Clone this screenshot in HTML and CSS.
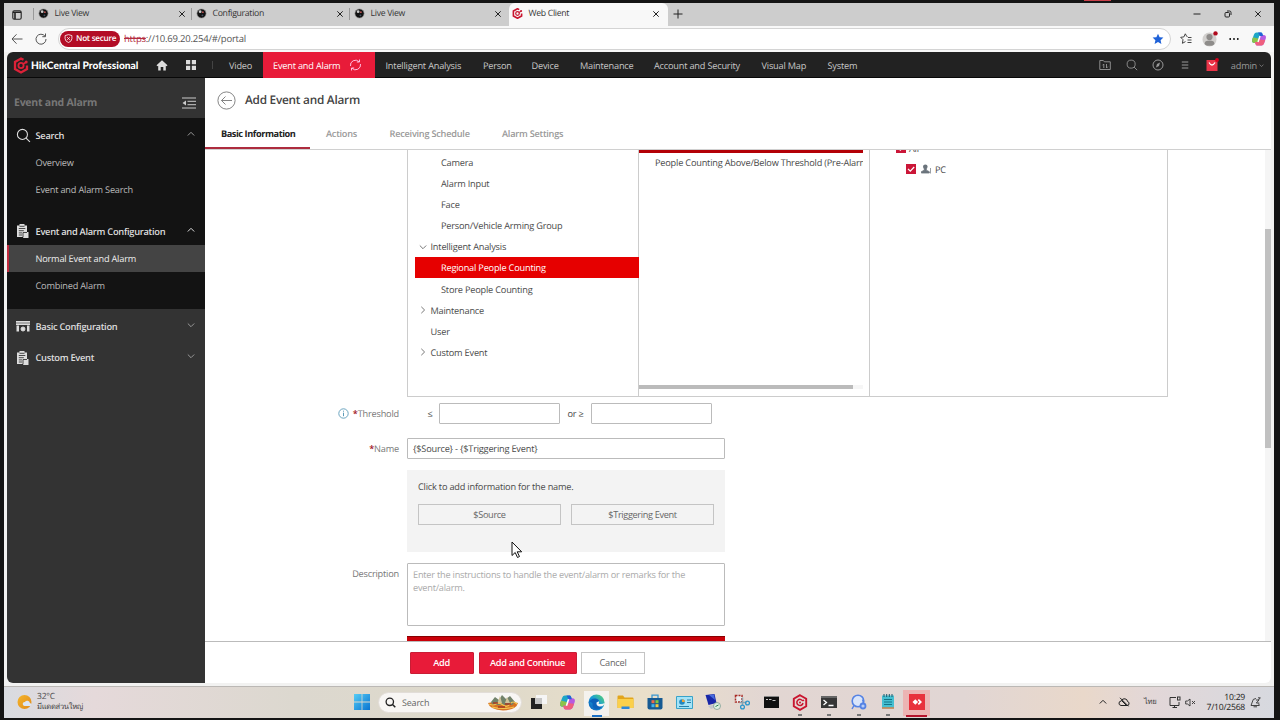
FILE: index.html
```html
<!DOCTYPE html>
<html lang="en">
<head>
    <meta charset="UTF-8">
    <meta name="viewport" content="width=device-width, initial-scale=1.0">
    <title>Web Client</title>
    <link rel="stylesheet" href="styles.css">
</head>
<body>
    <svg class="defs" width="0" height="0">
        <defs>
            <linearGradient id="blue" x1="0" y1="0" x2="1" y2="1"><stop offset="0" stop-color="#55cdf6"/><stop offset="1" stop-color="#0873d0"/></linearGradient>
            <linearGradient id="edge" x1="0" y1="1" x2="1" y2="0"><stop offset="0" stop-color="#0b56b4"/><stop offset=".5" stop-color="#169bd9"/><stop offset="1" stop-color="#5fd86a"/></linearGradient>
            <linearGradient id="sun" x1="0" y1="0" x2="1" y2="1"><stop offset="0" stop-color="#f5b52a"/><stop offset="1" stop-color="#e08a1c"/></linearGradient>
            <symbol id="globe" viewBox="0 0 12 12">
                <circle cx="6" cy="6" r="5" fill="#111" stroke="#999" stroke-width=".7"/>
                <circle cx="4.5" cy="4" r="1.5" fill="#ccc"/><circle cx="7.5" cy="4.5" r="1" fill="#b55"/><circle cx="7" cy="8" r="1" fill="#456"/>
            </symbol>
            <symbol id="close" viewBox="0 0 8 8"><path d="M1.3 1.3l5.4 5.4M6.7 1.3L1.3 6.7" stroke="#222" fill="none"/></symbol>
            <symbol id="hik" viewBox="0 0 16 16">
                <path d="M10.5 2.3L8 1 2 4.4v7.2L8 15l6-3.4V8" fill="none" stroke="currentColor" stroke-width="2.3"/>
                <circle cx="8" cy="8" r="2.6" fill="none" stroke="currentColor" stroke-width="1.8"/>
                <path d="M10 6.5l3.5-2" stroke="currentColor" stroke-width="1.5"/><circle cx="13.2" cy="4.4" r="1.5" fill="currentColor"/>
            </symbol>
            <symbol id="hex" viewBox="0 0 16 17">
                <path d="M8 1.200L14.200 4.800v7.400L8 15.800 1.800 12.200V4.800z" fill="none" stroke="currentColor" stroke-width="1.900"/>
                <path d="M10.700 7A3.100 3.100 0 1 0 11 9" fill="none" stroke="currentColor" stroke-width="1.500"/><circle cx="8" cy="8.500" r="1" fill="currentColor"/><path d="M10.500 7l1.500-1" stroke="currentColor" stroke-width="1.500"/>
            </symbol>
            <symbol id="copilot" viewBox="0 0 16 16">
                <path d="M5.5 1.5h4.2c1 0 1.5.6 1.8 1.5L12 5H9L6.7 12H3.5C1.3 12 .6 10.500 1.200 8.500L3 3.500Q3.700 1.500 5.500 1.500z" fill="#1ea6c6"/>
                <path d="M1.200 8.500L2 6.200l6 1.600L6.700 12H3.500C1.300 12 .6 10.500 1.200 8.500z" fill="#8cc34b"/>
                <path d="M10.500 14.500H6.300c-1 0-1.500-.6-1.800-1.500L4 11h3l2.300-7h3.200c2.200 0 2.900 1.500 2.300 3.500L13 12.500q-.7 2-2.500 2z" fill="#b65be0"/>
                <path d="M10.500 14.500H6.300c-1 0-1.500-.6-1.800-1.500L4 11h3l.9-2.600 6.300.700L13 12.500q-.7 2-2.500 2z" fill="#ef5f7e"/>
                <path d="M7 1.500h2.700c1 0 1.500.6 1.800 1.500L12 5H9z" fill="#2460d8"/>
                <path d="M9 5L7 11" stroke="#fff" stroke-width="1.500"/>
            </symbol>
            <symbol id="up" viewBox="0 0 8 8"><path d="M.8 5.500L4 2.300l3.200 3.200" fill="none" stroke="currentColor"/></symbol>
            <symbol id="down" viewBox="0 0 8 8"><path d="M.8 2.500L4 5.700l3.200-3.200" fill="none" stroke="currentColor"/></symbol>
            <symbol id="right" viewBox="0 0 8 8"><path d="M2.300.8L5.600 4 2.300 7.200" fill="none" stroke="currentColor"/></symbol>
            <symbol id="lens" viewBox="0 0 14 14"><circle cx="6" cy="6" r="4.700" fill="none" stroke="currentColor"/><path d="M9.400 9.400l3.600 3.600" stroke="currentColor"/></symbol>
            <symbol id="clip" viewBox="0 0 13 14">
                <path d="M1 1.500h2.500V0h5v1.500H11V8h1.500v6H7v-1H1z" fill="currentColor"/>
                <path d="M2.800 4.500h6.500M2.800 6.700h5M2.800 8.900h3.200M2.800 11h3.200M3.500 2.300h5M7 13.500V8.500h4" stroke="#222" stroke-width=".8" fill="none"/>
            </symbol>
            <symbol id="check" viewBox="0 0 10 10"><path d="M0 0h10v10H0z" fill="#cb1638"/><path d="M2 4.800L4.300 7.200 8.200 3" fill="none" stroke="#fff" stroke-width="1.200"/></symbol>
        </defs>
    </svg>

    <div class="window">
        <div class="tabstrip">
            <div class="tab-actions">
                <svg width="10" height="10" viewBox="0 0 10 10"><rect x=".8" y=".8" width="8.400" height="8.400" rx="1.500" fill="none" stroke="#222" stroke-width="1.100"/><path d="M1 2.200h8M3 2v7" stroke="#222" stroke-width="1.600"/></svg>
            </div>
            <div class="tab"><svg width="11" height="11"><use href="#globe"/></svg><span>Live View</span><svg class="x" width="8" height="8"><use href="#close"/></svg></div>
            <div class="tab"><svg width="11" height="11"><use href="#globe"/></svg><span>Configuration</span><svg class="x" width="8" height="8"><use href="#close"/></svg></div>
            <div class="tab"><svg width="11" height="11"><use href="#globe"/></svg><span>Live View</span><svg class="x" width="8" height="8"><use href="#close"/></svg></div>
            <div class="tab active"><svg class="red" width="11" height="11"><use href="#hik"/></svg><span>Web Client</span><svg class="x" width="8" height="8"><use href="#close"/></svg></div>
            <svg class="plus" width="10" height="10" viewBox="0 0 10 10"><path d="M5 .5v9M.5 5h9" stroke="#222"/></svg>
            <div class="win-buttons">
                <svg width="8" height="8" viewBox="0 0 8 8"><path d="M.5 4h7" stroke="#222"/></svg>
                <svg width="8" height="8" viewBox="0 0 8 8"><rect x="1" y="2.500" width="4.500" height="4.500" rx="1" fill="none" stroke="#222"/><path d="M3 1h2.500Q7 1 7 2.500V5" fill="none" stroke="#222"/></svg>
                <svg width="8" height="8"><use href="#close"/></svg>
            </div>
        </div>

        <div class="toolbar">
            <svg class="back" width="12" height="12" viewBox="0 0 12 12"><path d="M11.500 6H1M5.500 1.300L1 6l4.500 4.700" fill="none" stroke="#555"/></svg>
            <svg class="reload" width="12" height="12" viewBox="0 0 12 12"><path d="M10 3.200A5 5 0 1 0 11 6M10.500.5v3.200H7.300" fill="none" stroke="#555"/></svg>
            <div class="address">
                <span class="insecure"><svg width="9" height="9" viewBox="0 0 9 9"><path d="M4.500.6l3.400 1v3q0 2.700-3.400 3.900Q1.100 7.300 1.100 4.600v-3zM3.200 3.200l2.600 2.600m0-2.600L3.200 5.800" fill="none" stroke="#fff" stroke-width=".8"/></svg>Not secure</span>
                <span class="url"><s>https</s>://10.69.20.254/#/portal</span>
                <svg class="star" width="12" height="12" viewBox="0 0 12 12"><path d="M6 .7l1.600 3.500 3.800.4-2.800 2.600.8 3.800L6 9.100 2.600 11l.8-3.800L.6 4.600l3.800-.4z" fill="#1f62d8"/></svg>
            </div>
            <svg class="fav" width="12" height="12" viewBox="0 0 12 12"><path d="M7.500 3.700L6.800 3.500 5.300.8 3.900 3.900.7 4.300 3 6.700l-.6 3.600L5.500 8.600M8 4.500h3.500M7.500 7h4M7.500 9.500h4" fill="none" stroke="#333" stroke-width=".9"/></svg>
            <svg class="avatar" width="17" height="16" viewBox="0 0 17 16"><circle cx="7.500" cy="8.500" r="7" fill="#d2d0ce"/><circle cx="7.500" cy="6" r="3.100" fill="#8e8c8a"/><ellipse cx="7.500" cy="12.200" rx="4.800" ry="2.600" fill="#8e8c8a"/><circle cx="13.500" cy="2.400" r="2.200" fill="#b0091c"/></svg>
            <svg class="dots" width="10" height="4" viewBox="0 0 10 4"><circle cx="1.200" cy="2" r=".9"/><circle cx="5" cy="2" r=".9"/><circle cx="8.800" cy="2" r=".9"/></svg>
            <svg width="16" height="16"><use href="#copilot"/></svg>
        </div>

        <div class="app">
            <header class="topbar">
                <svg class="brand-mark" width="16" height="17"><use href="#hik"/></svg>
                <span class="brand">HikCentral Professional</span>
                <svg class="home" width="12" height="11" viewBox="0 0 12 11"><path d="M6 .3l5.500 5-1 .9-.7-.5V10.500H7.300V7H4.700v3.500H2.200V5.700l-.7.5-1-.9z" fill="#ddd"/></svg>
                <svg class="apps" width="10" height="10" viewBox="0 0 10 10"><path d="M0 0h4.200v4.200H0zM5.800 0H10v4.200H5.800zM0 5.800h4.200V10H0zM5.800 5.800H10V10H5.800z" fill="#ddd"/></svg>
                <i class="bar"></i>
                <nav class="nav">
                    <span>Video</span>
                    <span class="current">Event and Alarm
                        <svg width="13" height="12" viewBox="0 0 13 12"><path d="M1.500 7A5 5 0 0 1 10 2.700M11.500 5A5 5 0 0 1 3 9.300M7.800 3h2.700V.5M5.200 9H2.500v2.500" fill="none" stroke="#fbd"/></svg>
                    </span>
                    <span>Intelligent Analysis</span>
                    <span>Person</span>
                    <span>Device</span>
                    <span>Maintenance</span>
                    <span>Account and Security</span>
                    <span>Visual Map</span>
                    <span>System</span>
                </nav>
                <div class="tools">
                    <svg width="12" height="12" viewBox="0 0 12 12"><path d="M.8 10.500v-9h3.500l1 1.300h6v7.700zM4.800 9V5L3.500 6.300M7.500 5v4l1.300-1.300" fill="none" stroke="#999" stroke-width=".9"/></svg>
                    <svg width="12" height="12"><use href="#lens"/></svg>
                    <svg width="12" height="12" viewBox="0 0 12 12"><circle cx="6" cy="6" r="5" fill="none" stroke="#999"/><path d="M8 3.500L7 7 4 8.500 5 5z" fill="#999"/></svg>
                    <svg width="12" height="12" viewBox="0 0 12 12"><path d="M2.800 3h6.500M2.800 6h6.500M2.800 9h6.500" stroke="#999"/></svg>
                    <svg width="14" height="14" viewBox="0 0 14 14"><path d="M1.500 2h11v11h-11z" fill="#ea3448"/><path d="M4 4.500q3 5 6 0" fill="none" stroke="#fff" stroke-width="1.300"/><circle cx="12" cy="2" r="1.900" fill="#d8001c"/></svg>
                    <span class="user">admin <svg width="5" height="5"><use href="#down"/></svg></span>
                </div>
            </header>

            <div class="main">
                <aside class="sidebar">
                    <div class="side-title"><span>Event and Alarm</span>
                        <svg width="14" height="12" viewBox="0 0 14 12"><path d="M0 1h14M5.500 4.300H14M5.500 7.700H14M0 11h14" stroke="#ccc"/><path d="M4 3.500v5L.5 6z" fill="#ccc"/></svg>
                    </div>
                    <div class="group">
                        <div class="head first"><svg width="15" height="15"><use href="#lens"/></svg><span>Search</span><svg class="arrow" width="8" height="8"><use href="#up"/></svg></div>
                        <div class="item short">Overview</div>
                        <div class="item">Event and Alarm Search</div>
                        <div class="head second"><svg width="13" height="14"><use href="#clip"/></svg><span>Event and Alarm Configuration</span><svg class="arrow bright" width="8" height="8"><use href="#up"/></svg></div>
                        <div class="item selected">Normal Event and Alarm</div>
                        <div class="item">Combined Alarm</div>
                    </div>
                    <div class="head basic"><svg width="14" height="13" viewBox="0 0 14 13"><path d="M0 1h14v4H0zM.5 5.500h2.500v6H.5zM11 5.500h2.500v6H11zM5 7l1.200.3.800-1.300.8 1.300L9 7l-.2 1.300 1.200.7-1.200.8L9 11l-1.200-.3L7 12l-.8-1.300L5 11l.2-1.200L4 9l1.200-.7z" fill="currentColor"/><path d="M0 3h14" stroke="#777"/></svg><span>Basic Configuration</span><svg class="arrow" width="8" height="8"><use href="#down"/></svg></div>
                    <div class="head custom"><svg width="13" height="14"><use href="#clip"/></svg><span>Custom Event</span><svg class="arrow" width="8" height="8"><use href="#down"/></svg></div>
                </aside>

                <section class="content">
                    <div class="page-title">
                        <svg width="19" height="19" viewBox="0 0 19 19"><circle cx="9.500" cy="9.500" r="8.600" fill="none" stroke="#777" stroke-width=".9"/><path d="M15 9.500H4.500M8.500 5.500l-4 4 4 4" fill="none" stroke="#777" stroke-width=".9"/></svg>
                        <h1>Add Event and Alarm</h1>
                    </div>
                    <div class="tabs">
                        <span class="on">Basic Information</span>
                        <span>Actions</span>
                        <span>Receiving Schedule</span>
                        <span>Alarm Settings</span>
                    </div>

                    <div class="scroller">
                        <div class="form">
                            <div class="picker">
                                <ul class="tree">
                                    <li class="leaf">Camera</li>
                                    <li class="leaf">Alarm Input</li>
                                    <li class="leaf">Face</li>
                                    <li class="leaf">Person/Vehicle Arming Group</li>
                                    <li><svg width="8" height="8"><use href="#down"/></svg>Intelligent Analysis</li>
                                    <li class="leaf chosen">Regional People Counting</li>
                                    <li class="leaf">Store People Counting</li>
                                    <li><svg width="8" height="8"><use href="#right"/></svg>Maintenance</li>
                                    <li class="plain">User</li>
                                    <li><svg width="8" height="8"><use href="#right"/></svg>Custom Event</li>
                                </ul>
                                <div class="events">
                                    <div class="event-chosen"></div>
                                    <div class="event">People Counting Above/Below Threshold (Pre-Alarm)</div>
                                    <div class="hbar"><i></i></div>
                                </div>
                                <div class="sources">
                                    <div class="source all"><svg class="toggle" width="8" height="8"><use href="#down"/></svg><svg width="10" height="10"><use href="#check"/></svg><span>All</span></div>
                                    <div class="source"><svg width="10" height="10"><use href="#check"/></svg>
                                        <svg class="person" width="11" height="10" viewBox="0 0 11 10"><circle cx="4.300" cy="2.700" r="2.300" fill="#6b747c"/><path d="M3.300 4.500h2v1.700l3 1.500V9H.3V7.700l3-1.500z" fill="#6b747c" stroke="#6b747c" stroke-width=".8"/><path d="M9.500 4v5.500" stroke="#9aa0a6"/></svg><span>PC</span></div>
                                </div>
                            </div>

                            <div class="row threshold">
                                <label><svg width="11" height="11" viewBox="0 0 11 11"><circle cx="5.500" cy="5.500" r="4.700" fill="none" stroke="#5b9bb8" stroke-width=".9"/><path d="M5.500 4.700v3.500M5.500 2.700v1" stroke="#5b9bb8"/></svg><b>*</b>Threshold</label>
                                <span class="le">≤</span><div class="input small"></div>
                                <span class="ge">or ≥</span><div class="input small"></div>
                            </div>
                            <div class="row name">
                                <label><b>*</b>Name</label>
                                <div class="input wide">{$Source} - {$Triggering Event}</div>
                            </div>
                            <div class="hint">
                                <p>Click to add information for the name.</p>
                                <div class="chips"><button>$Source</button><button>$Triggering Event</button></div>
                            </div>
                            <div class="row description">
                                <label>Description</label>
                                <div class="input area">Enter the instructions to handle the event/alarm or remarks for the event/alarm.</div>
                            </div>
                            <div class="next-block"></div>
                        </div>
                        <div class="vbar"><i></i></div>
                    </div>

                    <div class="footer">
                        <button class="primary add">Add</button>
                        <button class="primary continue">Add and Continue</button>
                        <button class="cancel">Cancel</button>
                    </div>
                </section>
            </div>
        </div>

        <div class="taskbar">
            <div class="weather">
                <svg width="16" height="16" viewBox="0 0 16 16"><circle cx="7.500" cy="8" r="7" fill="url(#sun)"/><path d="M7.500 12a2 2 0 0 1 .4-4 2.700 2.700 0 0 1 5 1 1.600 1.600 0 0 1 .6 3z" fill="#dce6f4"/></svg>
                <div><span>32°C</span><span class="thai">มีแดดส่วนใหญ่</span></div>
            </div>
            <svg class="start" width="16" height="16" viewBox="0 0 16 16"><path d="M0 0h7.600v7.600H0zM8.400 0H16v7.600H8.400zM0 8.400h7.600V16H0zM8.400 8.400H16V16H8.400z" fill="url(#blue)"/></svg>
            <div class="search">
                <svg width="11" height="11" viewBox="0 0 11 11"><circle cx="4.800" cy="4.800" r="3.700" fill="none" stroke="#222" stroke-width="1.300"/><path d="M7.500 7.500l2.800 2.800" stroke="#222" stroke-width="1.500"/></svg>
                <span>Search</span>
                <svg width="32" height="17" viewBox="0 0 32 17"><path d="M1 9q15-4 30 0-2 7-15 7.500Q3 16 1 9z" fill="#d77322"/><path d="M4 8l4-5 4 3 3-5 4 4 4-3 5 6-3 3H6z" fill="#71826a"/><path d="M13 2l2 7-5 1zM20 3l3 6h-5z" fill="#cfc39a"/><path d="M2 10q4 2 7 0t7 1 7-1 7 0M5 13q10 3 22 0" fill="none" stroke="#f4c451" stroke-width="1.200"/><path d="M6 9h5M18 10h6M11 13h7" stroke="#a53c24" stroke-width="1.500"/></svg>
            </div>
            <div class="pins">
                <span><svg width="16" height="16" viewBox="0 0 16 16"><path d="M5 1h11v9H5z" fill="#f5f5f5"/><path d="M0 4h11v11H0z" fill="#222"/><path d="M4 4h7v6H4z" fill="#c5c5c5"/></svg></span>
                <span><svg width="17" height="17"><use href="#copilot"/></svg></span>
                <span class="lit"><svg width="17" height="17" viewBox="0 0 17 17"><circle cx="8.500" cy="8.500" r="8" fill="url(#edge)"/><path d="M.6 9q2-5 7-4.500 3.800.5 3.500 3.500-.3 1.500-1 2 3 1.500 5.800-.5-2 6-7.400 6Q4 14.500 4.500 9.500 2 6.500.6 9z" fill="#0c62ba"/><path d="M8.500 8.500q-.5 3.500 3 4 3 .2 4.300-1.500l.7-2q-2 1.500-6 .8 1-1 .3-2.500z" fill="#f1f6f7"/></svg></span>
                <span><svg width="17" height="15" viewBox="0 0 17 15"><path d="M.5 1.500Q.5.500 1.500.5H6l1.500 2h8q1 0 1 1V13H.5z" fill="#e2a51c"/><path d="M.5 4h16v8q0 1-1 1h-14q-1 0-1-1z" fill="#fbd04b"/><path d="M4.500 11.500h8v2.500h-8z" fill="#2c87d8"/></svg></span>
                <span><svg width="16" height="16" viewBox="0 0 16 16"><path d="M5 4V1.200h6V4" fill="none" stroke="#3b97d0" stroke-width="1.300"/><path d="M.5 4h15v9.500q0 2-2 2h-11q-2 0-2-2z" fill="#165a92"/><path d="M4.500 6.200h3v3h-3z" fill="#ef6b46"/><path d="M8.500 6.200h3v3h-3z" fill="#82c83c"/><path d="M4.500 10.200h3v3h-3z" fill="#40b4ef"/><path d="M8.500 10.200h3v3h-3z" fill="#fac83e"/></svg></span>
                <span><svg width="17" height="13" viewBox="0 0 17 13"><path d="M.5.500h16v12H.5z" fill="#a4e3f7" stroke="#38a3c9"/><circle cx="6" cy="6" r="2.800" fill="#2287bf"/><path d="M6 6V3.200A2.800 2.800 0 0 1 8.800 6z" fill="#f0a236"/><path d="M11 4h4M11 6.500h4M3 10.500h10" stroke="#2b7fa6"/></svg></span>
                <span><svg width="16" height="16" viewBox="0 0 16 16"><path d="M.5 1l9-1 2 9-8 2z" fill="#1726a8"/><path d="M4 1l5-.6L10 6z" fill="#476bdd"/><path d="M3 12l8-2 2 2-7 3z" fill="#c3c7cc"/><circle cx="12" cy="12" r="3.500" fill="#dcefe0" stroke="#71948a" stroke-width=".7"/><path d="M10.500 12.500l3-1.500" stroke="#298150"/></svg></span>
                <span><svg width="16" height="16" viewBox="0 0 16 16"><path d="M1.500 1.500h6.500v6.500H1.500z" fill="#eee" stroke="#a92c26" stroke-width="1.500" stroke-dasharray="2 1"/><path d="M8.500 3.500v8M5.500 8.500h7" stroke="#8aa3b0" stroke-width="1.500"/><circle cx="8.500" cy="13" r="1.900" fill="none" stroke="#2b96cc" stroke-width="1.300"/><circle cx="13.500" cy="9" r="1.900" fill="none" stroke="#2b96cc" stroke-width="1.300"/></svg></span>
                <span><svg width="15" height="12" viewBox="0 0 15 12"><path d="M0 0h15v12H0z" fill="#111"/><path d="M0 .5h15" stroke="#888"/><path d="M2 3.500h2M5 3.500h2.500M8.500 4.500h3" stroke="#ddd" stroke-width=".9"/></svg></span>
                <span class="running brand-red"><svg width="16" height="17"><use href="#hex"/></svg></span>
                <span class="running"><svg width="16" height="14" viewBox="0 0 16 14"><path d="M0 1h16v12H0z" fill="#363636"/><path d="M0 1h16v2H0z" fill="#666"/><path d="M2.500 5l3 2.500-3 2.500M7.500 10.500h5" fill="none" stroke="#fff" stroke-width="1.300"/></svg></span>
                <span class="running"><svg width="16" height="16" viewBox="0 0 16 16"><circle cx="7" cy="7" r="5.800" fill="#d9e5fa" stroke="#5583e4" stroke-width="1.600"/><path d="M3 11.500L1 15M11.500 5.500q2 4-1 6.500" fill="none" stroke="#5583e4" stroke-width="1.500"/><circle cx="12" cy="12" r="2.500" fill="#b8cdf7" stroke="#5583e4" stroke-width="1.800"/></svg></span>
                <span class="running"><svg width="14" height="16" viewBox="0 0 14 16"><path d="M1 1.500h12v12H1z" fill="#45bfd1"/><path d="M3 0v3M5.700 0v3M8.300 0v3M11 0v3" stroke="#17586a"/><path d="M3 5.500h8M3 8h8M3 10.500h8" stroke="#147587"/><path d="M1 14h12" stroke="#b97334" stroke-width="1.300"/></svg></span>
                <span class="anydesk"><svg width="16" height="16" viewBox="0 0 16 16"><path d="M0 0h16v16H0z" fill="#e8313c"/><path d="M3.500 8l2.800-2.800L9.100 8l-2.800 2.800zM8.700 6.200l1.200-1.200L13 8l-3.100 3-1.200-1.200L10.400 8z" fill="#fff"/></svg></span>
            </div>
            <div class="tray">
                <svg class="up" width="8" height="8"><use href="#up"/></svg>
                <svg class="cloud" width="12" height="10" viewBox="0 0 12 10"><path d="M3 8.500Q.7 8 1 6t2.300-2Q4.500 1.200 7 1.800t2.500 2.700Q11.500 5 11 7T9 8.500zM2 .8l8.500 8.500M4 4l4.500 4.500" fill="none" stroke="#222"/></svg>
                <span class="thai lang">ไทย</span>
                <svg class="net" width="12" height="12" viewBox="0 0 12 12"><path d="M7 1.500H1v8h9V6M3.500 11.500h4.500M5.500 9.500v2" fill="none" stroke="#333"/><rect x="8.500" y="1" width="2.500" height="3" fill="none" stroke="#333"/></svg>
                <svg class="mute" width="11" height="9" viewBox="0 0 11 9"><path d="M.7 3h1.800L5 1v7L2.500 6H.7zM7 3l3 3M10 3L7 6" fill="none" stroke="#333" stroke-width=".9"/></svg>
                <div class="clock"><span>10:29</span><span>7/10/2568</span></div>
                <svg class="bell" width="11" height="11" viewBox="0 0 11 11"><path d="M6 1.500Q2.500 1.500 2.300 5L1 8.500h8.300L8.700 6.500M3.500 9.800h3.500M6 3h3L6.300 6h3M8 .8h2.300L8.500 3" fill="none" stroke="#333" stroke-width=".9"/></svg>
            </div>
        </div>
    </div>

    <svg class="cursor" width="12" height="18" viewBox="0 0 12 18"><path d="M1 1v13.500l3.200-3 2.300 5 2-1-2.300-4.700h4.500z" fill="#fff" stroke="#111"/></svg>
    <i class="rec"></i>
</body>
</html>
```
FILE: styles.css
```css
* {
    box-sizing: border-box;
    margin: 0;
    padding: 0;
}

body {
    width: 1280px;
    height: 720px;
    overflow: hidden;
    background-color: #141414;
    font-family: "Open Sans", "Noto Sans", sans-serif;
    font-size: 9.2px;
    letter-spacing: -0.2px;
    line-height: 13px;
    color: #4a4a4a;
    text-rendering: geometricPrecision;
    white-space: nowrap;
}

svg {
    display: block;
    flex-shrink: 0;
}

.defs {
    position: absolute;
}

.window {
    width: 1270px;
    height: 715px;
    margin: 3px 0 0 4px;
    background-color: #f2f2f1;
    display: flex;
    flex-direction: column;
}

/* browser chrome */
.tabstrip {
    height: 23px;
    background-color: #cdcdcd;
    display: flex;
    align-items: center;
    color: #333;
    font-size: 8.7px;
    letter-spacing: -0.3px;
}

.tab-actions {
    width: 29px;
    padding-left: 8px;
}

.tab {
    width: 158px;
    height: 23px;
    display: flex;
    align-items: center;
    padding: 0 5px 2px 5px;
    background: linear-gradient(#999, #999) 0 5px / 1px 12px no-repeat;
}

.tab span {
    margin-left: 5.5px;
    flex: 1;
}

.tab.active {
    background: #f8f8f8;
    border-radius: 6px 6px 0 0;
    margin-left: 2px;
    width: 159px;
    padding-left: 3px;
    padding-right: 8px;
}

.red,
.brand-red {
    color: #c9152f;
}

.plus {
    margin: 0 0 1px 5px;
}

.win-buttons {
    margin-left: auto;
    display: flex;
    gap: 22.5px;
    padding: 0 12px 2px 0;
}

.toolbar {
    height: 26px;
    background-color: #f8f8f8;
    display: flex;
    align-items: center;
    padding: 0 7px 1px 7px;
}

.reload {
    margin-left: 12px;
}

.address {
    width: 1113px;
    height: 22px;
    margin-left: 11px;
    border: 1px solid #d4d4d4;
    border-radius: 11px;
    background-color: #fff;
    display: flex;
    align-items: center;
    padding: 0 6px 0 1px;
}

.insecure {
    width: 60px;
    height: 16px;
    border-radius: 8px;
    background-color: #b30d26;
    color: #fff;
    font-weight: 600;
    font-size: 8.2px;
    letter-spacing: -0.28px;
    display: flex;
    align-items: center;
    gap: 3px;
    padding-left: 4px;
}

.url {
    margin-left: 4px;
    font-size: 9.5px;
    letter-spacing: -0.22px;
    color: #555;
}

.url s {
    color: #b32b40;
}

.star {
    margin-left: auto;
}

.fav {
    margin-left: 9px;
}

.avatar {
    margin-left: 10px;
}

.dots {
    margin-left: 10px;
}

.dots + svg {
    margin-left: auto;
}

/* application */
.app {
    width: 1264px;
    height: 631px;
    margin-left: 3px;
    border-radius: 6px;
    overflow: hidden;
    background-color: #fff;
}

.topbar {
    height: 26px;
    background-color: #222;
    border-bottom: 1px solid #080808;
    color: #c8c8c8;
    display: flex;
    align-items: center;
    padding-top: 1px;
}

.brand-mark {
    margin-left: 6px;
    color: #dc2138;
}

.brand {
    width: 108px;
    margin-left: 2px;
    padding-top: 2px;
    color: #fff;
    font-family: Lato, sans-serif;
    font-weight: 900;
    font-size: 10.2px;
    letter-spacing: 0;
}

.home {
    margin-left: 17px;
}

.apps {
    margin-left: 18px;
}

.bar {
    width: 1px;
    height: 8px;
    margin-left: 16px;
    background-color: #444;
}

.nav {
    display: grid;
    grid-template-columns: 43px 112px 97.5px 48.5px 48.5px 74px 107.5px 66px 50px;
    align-items: center;
    margin-left: 7px;
}

.nav span {
    padding-left: 9px;
}

.nav .current {
    height: 26px;
    margin-top: -1px;
    padding-top: 1px;
    padding-left: 10px;
    background-color: #e81b39;
    color: #fff;
    display: flex;
    align-items: center;
    gap: 9px;
}

.nav span:nth-child(n+3) {
    padding-left: 10.5px;
}

.tools {
    margin-left: auto;
    padding-right: 7px;
    display: flex;
    align-items: center;
    gap: 14.5px;
    color: #999;
}

.user {
    display: flex;
    align-items: center;
    gap: 2px;
    margin-left: -3px;
}

.main {
    display: flex;
    height: 605px;
}

.sidebar {
    width: 198px;
    background-color: #333;
    color: #ddd;
}

.side-title {
    height: 40px;
    display: flex;
    align-items: center;
    justify-content: space-between;
    padding: 10px 9px 0 7px;
    font-size: 10.5px;
    font-weight: 700;
    letter-spacing: -0.24px;
    color: #777;
}

.group {
    height: 191px;
    background-color: #131313;
}

.head {
    display: flex;
    align-items: center;
    height: 34px;
    padding: 0 10px 0 9px;
    font-size: 9.3px;
    font-weight: 600;
    letter-spacing: -0.29px;
}

.head span {
    flex: 1;
}

.head svg + span {
    margin-left: 6.5px;
}

.head.first svg + span {
    margin-left: 4.5px;
}

.head.basic svg + span {
    margin-left: 5.5px;
}

.head.first {
    height: 32px;
    padding-top: 3px;
    padding-left: 9px;
}

.head.second {
    height: 28px;
    margin-top: 14px;
}

.head.custom {
    height: 30px;
    padding-bottom: 1px;
}

.arrow {
    color: #999;
    margin-bottom: 3px;
}

.arrow.bright {
    color: #ddd;
}

.item {
    height: 27px;
    padding-left: 28.5px;
    line-height: 27px;
    color: #bbb;
}

.item.short {
    height: 26px;
    line-height: 26px;
}

.item.selected {
    padding-left: 26.5px;
    border-left: 2px solid #c02a3c;
    background-color: #444;
    color: #eee;
}

.content {
    width: 1066px;
    display: flex;
    flex-direction: column;
}

.page-title {
    height: 44px;
    display: flex;
    align-items: center;
    gap: 9px;
    padding-left: 12px;
}

.page-title h1 {
    font-size: 11.8px;
    font-weight: 600;
    letter-spacing: -0.24px;
    color: #444;
}

.tabs {
    height: 28px;
    display: grid;
    grid-template-columns: 105px 63.5px 112.5px 100px;
    border-bottom: 1px solid #d0d0d0;
    font-weight: 600;
    line-height: 24px;
    letter-spacing: -0.24px;
    color: #999;
}

.tabs span {
    padding-left: 16px;
}

.tabs .on {
    height: 27px;
    border-bottom: 2px solid #ad2c3e;
    color: #222;
    font-weight: 700;
    letter-spacing: -0.43px;
}

.scroller {
    height: 491px;
    overflow: hidden;
    display: flex;
}

.form {
    flex: 1;
    padding-left: 202px;
}

.picker {
    width: 761px;
    height: 247px;
    display: grid;
    grid-template-columns: 231px 231px 1fr;
    border: 1px solid #ccc;
    border-top: none;
}

.tree {
    list-style: none;
    padding: 1.5px 0 0 7px;
    border-right: 1px solid #ccc;
}

.tree li {
    height: 21.17px;
    display: flex;
    align-items: center;
    gap: 3.5px;
    padding-left: 4px;
}

.tree li svg {
    color: #777;
}

.tree .plain {
    padding-left: 15.5px;
}

.tree .leaf {
    padding-left: 26px;
}

.tree .chosen {
    margin-right: -1px;
    background-color: #e60000;
    color: #fff;
}

.events {
    display: flex;
    flex-direction: column;
    padding-right: 6px;
    border-right: 1px solid #ccc;
    overflow: hidden;
}

.event-chosen {
    height: 2.5px;
    background-color: #b30006;
}

.event {
    height: 21px;
    line-height: 20px;
    padding-left: 16px;
    overflow: hidden;
}

.hbar {
    height: 4px;
    margin: auto 0 7px;
    background-color: #f6f6f6;
}

.hbar i {
    display: block;
    width: 214px;
    height: 4px;
    background-color: #bbb;
}

.source {
    display: flex;
    align-items: center;
    height: 21px;
    padding-left: 36px;
}

.source.all {
    padding-left: 11px;
    margin-top: -12.5px;
}

.toggle {
    margin-right: 7px;
    color: #999;
}

.source span {
    margin-left: 3px;
}

.person {
    margin-left: 5px;
}

.row {
    display: flex;
    align-items: center;
    margin-left: -202px;
}

label {
    width: 202px;
    padding-right: 8px;
    display: flex;
    justify-content: flex-end;
    align-items: center;
    color: #777;
}

label b {
    color: #a0141e;
    font-weight: 600;
}

label svg {
    margin-right: 4px;
}

.input {
    height: 21px;
    border: 1px solid #bbb;
    border-radius: 1px;
    padding: 0 5px;
    line-height: 19px;
}

.small {
    width: 121px;
}

.le {
    width: 32px;
    padding-left: 20.5px;
}

.ge {
    width: 31px;
    padding-left: 7.5px;
}

.threshold {
    margin-top: 6px;
}

.name {
    margin-top: 14px;
}

.wide {
    width: 318px;
}

.hint {
    width: 318px;
    height: 82px;
    margin-top: 11px;
    padding: 10px 11px 0;
    background-color: #f3f3f3;
}

.chips {
    display: flex;
    gap: 10px;
    margin-top: 11px;
}

button {
    height: 21px;
    border: 1px solid #c4c4c4;
    background-color: transparent;
    font: inherit;
    letter-spacing: inherit;
    color: #666;
}

.chips button {
    width: 143px;
    letter-spacing: -0.35px;
}

.description {
    margin-top: 11px;
    align-items: flex-start;
}

.description label {
    padding-top: 4px;
}

.area {
    width: 318px;
    height: 63px;
    padding-top: 4px;
    line-height: 13px;
    letter-spacing: -0.22px;
    color: #aaa;
    white-space: normal;
}

.next-block {
    width: 318px;
    height: 20px;
    margin-top: 10px;
    border-top: 1px solid #800;
    background-color: #ca0009;
}

.vbar {
    width: 6px;
    padding-top: 79px;
    background-color: #f5f5f5;
}

.vbar i {
    display: block;
    height: 219px;
    background-color: #c1c1c1;
}

.footer {
    height: 42px;
    border-top: 1px solid #bbb;
    display: flex;
    gap: 5px;
    padding: 10px 0 0 204.5px;
}

.primary {
    background-color: #e81b39;
    border-color: #c91d35;
    border-radius: 1px;
    color: #fff;
    font-weight: 600;
    letter-spacing: -0.28px;
}

.footer button {
    height: 22px;
    padding-bottom: 1px;
}

.add {
    width: 64px;
}

.continue {
    width: 98px;
}

.cancel {
    width: 64px;
    margin-left: -0.5px;
}

/* taskbar */
.taskbar {
    height: 32px;
    margin-top: 3px;
    border-top: 1px solid #bbb8b5;
    background: linear-gradient(90deg, #d9dbe0 0, #e5d9da 90px, #dcd8cf 290px, #ded9ca 480px, #e9dfca 640px, #e2d6d2 760px, #e1d6d4 960px, #e9d8ca 1080px, #e2d7d8 1150px, #d7d9df 100%);
    display: flex;
    align-items: center;
    padding-bottom: 1px;
    font-size: 9px;
}

.weather {
    width: 350px;
    padding: 0 0 1px 13px;
    display: flex;
    align-items: center;
    gap: 4px;
    line-height: 11px;
}

.weather span,
.clock span {
    display: block;
}

.weather span {
    font-size: 8.5px;
}

.weather .thai,
.thai {
    font-size: 7.6px;
    color: #444;
    letter-spacing: -0.3px;
}

.search {
    width: 144px;
    height: 21px;
    margin: 0 2px 0 8px;
    border-radius: 11px;
    background-color: #f8f6f4;
    border: 1px solid #e2ddd8;
    display: flex;
    align-items: center;
    padding: 0 2px 0 6px;
    color: #666;
    font-size: 9px;
}

.search span {
    flex: 1;
    margin-left: 6px;
}

.pins {
    display: flex;
    width: 407.4px;
}

.pins span {
    width: 29.1px;
    height: 31px;
    display: flex;
    align-items: center;
    justify-content: center;
}

.pins .lit {
    background: linear-gradient(#1a6fc4, #1a6fc4) 50% 28px / 10px 2px no-repeat, linear-gradient(#f4f2ee, #f4f2ee) 50% 4px / 25px 25px no-repeat;
}

.pins .running {
    background: linear-gradient(#777, #777) 50% 27px / 4px 2px no-repeat;
}

.pins .anydesk {
    background: linear-gradient(#b5122b, #b5122b) 50% 28px / 21px 2px no-repeat, linear-gradient(#ecb4b3, #ecb4b3) 50% 3px / 27px 26px no-repeat;
}

.tray {
    margin-left: auto;
    display: flex;
    align-items: center;
    color: #222;
}

.cloud {
    margin-left: 11px;
}

.lang {
    width: 13px;
    margin-left: 14px;
}

.net {
    margin-left: 12px;
}

.mute {
    margin-left: 4px;
}

.clock {
    width: 49px;
    text-align: right;
    line-height: 10.5px;
    font-size: 8.6px;
    letter-spacing: -0.25px;
}

.bell {
    margin: 0 13px 0 5px;
}

/* overlays */
.cursor {
    position: absolute;
    left: 510.5px;
    top: 541px;
}

.rec {
    position: absolute;
    left: 1084px;
    top: 0;
    width: 27px;
    height: 1px;
    background-color: #c9404a;
}
```
